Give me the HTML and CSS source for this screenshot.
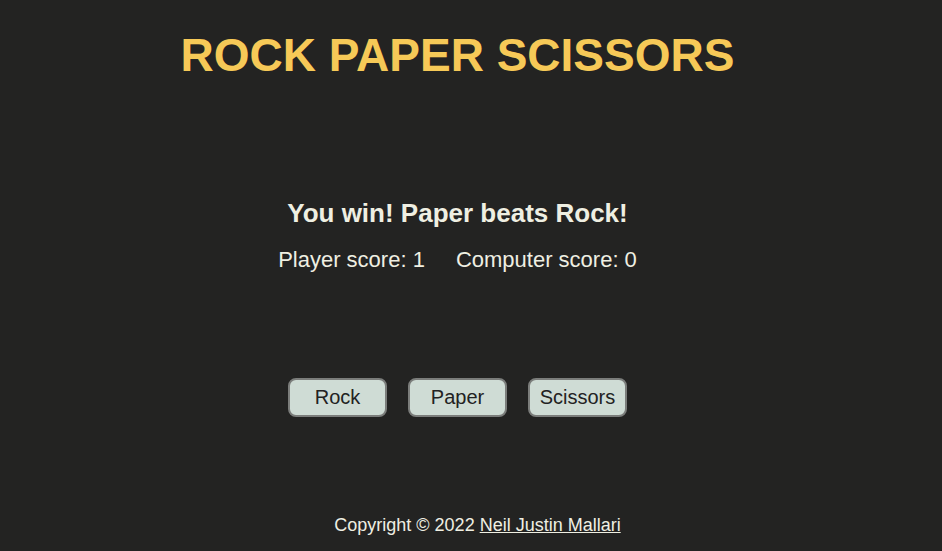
FILE: index.html
```html
<!DOCTYPE html>
<html>
<head>
<meta charset="utf-8">
<link rel="stylesheet" href="styles.css">
</head>
<body>
<div class="page">
  <h1 class="title">ROCK PAPER SCISSORS</h1>
  <div class="results">
    <p class="message">You win! Paper beats Rock!</p>
    <div class="scores">
      <span>Player score: 1</span>
      <span>Computer score: 0</span>
    </div>
  </div>
  <div class="buttons">
    <button class="btn">Rock</button>
    <button class="btn">Paper</button>
    <button class="btn">Scissors</button>
  </div>
</div>
<footer class="footer">Copyright © 2022 <a href="#" class="link">Neil Justin Mallari</a></footer>
</body>
</html>
```
FILE: styles.css
```css
html, body {
  margin: 0;
  padding: 0;
  background: #232322;
  height: 100%;
}
body {
  font-family: "Liberation Sans", Arial, sans-serif;
  color: #efefe2;
  display: flex;
  flex-direction: column;
  width: 942px;
  height: 551px;
  overflow: hidden;
}
.page {
  width: 915px;
  display: flex;
  flex-direction: column;
  align-items: center;
}
.title {
  margin: 27px 0 0;
  font-size: 46px;
  line-height: 56px;
  font-weight: bold;
  color: #f6c957;
}
.results {
  margin-top: 115px;
  display: flex;
  flex-direction: column;
  align-items: center;
}
.message {
  margin: 0;
  font-size: 26px;
  line-height: 30px;
  font-weight: bold;
}
.scores {
  margin-top: 19px;
  display: flex;
  gap: 31px;
  font-size: 22px;
  line-height: 26px;
}
.buttons {
  margin-top: 105px;
  display: flex;
  gap: 21px;
}
.btn {
  width: 99px;
  height: 39px;
  background: #cfdcd5;
  border: 2px solid #7b7d7b;
  border-radius: 8px;
  font-family: "Liberation Sans", Arial, sans-serif;
  font-size: 20px;
  color: #222;
  padding: 0;
}
.footer {
  margin-top: auto;
  margin-bottom: 15px;
  padding-left: 13px;
  text-align: center;
  font-size: 18px;
  line-height: 22px;
  color: #efefe2;
}
.link {
  color: #efefe2;
}
```
